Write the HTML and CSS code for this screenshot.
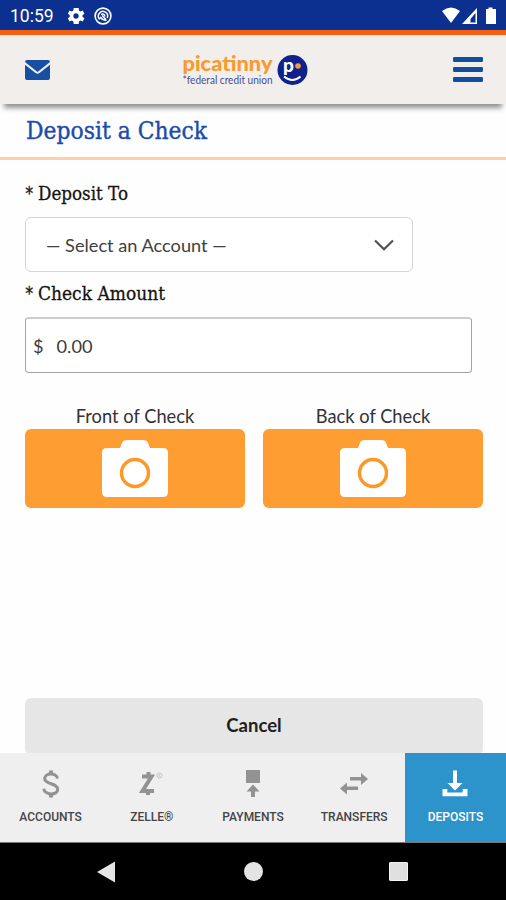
FILE: index.html
```html
<!DOCTYPE html>
<html lang="en">
<head>
<meta charset="utf-8">
<title>Deposit a Check</title>
<link rel="stylesheet" href="styles.css">
</head>
<body>
<div class="status">
  <span class="clock">10:59</span>
  <svg class="gear" width="16" height="16" viewBox="3 3 18 18"><path fill="#fff" fill-rule="evenodd" d="M19.4 13c.1-.7.1-1.300 0-2l2.100-1.600-2-3.500-2.500 1a8 8 0 0 0-1.700-1L15 3H9.500L9 5.900a8 8 0 0 0-1.700 1l-2.500-1-2 3.500L4.900 11v2l-2.100 1.600 2 3.500 2.500-1 1.700 1 .5 2.900H15l.3-2.900 1.700-1 2.500 1 2-3.500zM12 15a3 3 0 1 1 0-6 3 3 0 0 1 0 6z"/></svg>
  <svg class="ring" width="18" height="18" viewBox="0 0 18 18" fill="none" stroke="#fff"><circle cx="9" cy="9" r="7.900" stroke-width="1.600"/><path d="M5.800 12.400A4.600 4.600 0 1 1 13.200 11" stroke-width="1.500"/><path d="M7 7.500q3-1.500 4 2M6 10q2 3 6.500 3.200M8 8.500l4 4" stroke-width="1.500"/></svg>
  <svg class="signals" width="56" height="18" viewBox="0 0 56 18" fill="#fff"><path d="M0 4Q9-3 18 4L9 16z"/><path fill-rule="evenodd" d="M35 1v16H20zM33.500 6l-5 6v3.500h5z"/><path d="M46.500.5h4V2H54v15H44V2h2.500z"/></svg>
</div>
<header class="header">
  <svg width="25" height="20" viewBox="0 0 25 20" fill="#1750a3"><path d="M2 0h21q2 0 2 2L12.500 12 0 2Q0 0 2 0z"/><path d="M0 4.800l10.500 8.300q2 1.400 4 0L25 4.800V18q0 2-2 2H2q-2 0-2-2z"/></svg>
  <svg class="logo" width="128" height="36" viewBox="0 0 128 36">
    <text class="brand" x="1.500" y="18.500" textLength="90" lengthAdjust="spacingAndGlyphs">picatinny</text>
    <text class="tagline" x="1.500" y="32" textLength="90" lengthAdjust="spacingAndGlyphs">*federal credit union</text>
    <circle cx="111.500" cy="18" r="15" fill="#10218b"/>
    <text class="mark" x="102" y="20">p</text>
    <circle cx="117" cy="14" r="2.800" fill="#f59a48"/>
    <path d="M103 24.500q8.500 7 16.500 0" fill="none" stroke="#fff" stroke-width="2"/>
  </svg>
  <svg width="30" height="25" viewBox="0 0 30 25" fill="#104f9f"><rect width="30" height="5" rx="1.200"/><rect y="10" width="30" height="5" rx="1.200"/><rect y="20" width="30" height="5" rx="1.200"/></svg>
</header>
<h1 class="title"><svg width="260" height="34" viewBox="0 0 260 34"><text x="0" y="24" textLength="181" lengthAdjust="spacingAndGlyphs">Deposit a Check</text></svg></h1>
<main class="form">
  <label class="label"><svg width="180" height="26" viewBox="0 0 180 26"><text x="0.500" y="19" textLength="7.500" lengthAdjust="spacingAndGlyphs">*</text><text x="13" y="18.500" textLength="90" lengthAdjust="spacingAndGlyphs">Deposit To</text></svg></label>
  <div class="select"><span>— Select an Account —</span><svg width="20" height="12" viewBox="0 0 20 12" fill="none" stroke="#505050" stroke-width="2.200"><path d="M1 1.500l9 8.700 9-8.700"/></svg></div>
  <label class="label second"><svg width="180" height="26" viewBox="0 0 180 26"><text x="0.500" y="19" textLength="7.500" lengthAdjust="spacingAndGlyphs">*</text><text x="13" y="19" textLength="127" lengthAdjust="spacingAndGlyphs">Check Amount</text></svg></label>
  <div class="amount"><span>$</span><span>0.00</span></div>
  <div class="photos">
    <div class="photo"><span class="caption">Front of Check</span><div class="shoot"><svg width="66" height="58" viewBox="0 0 66 58"><path fill="#fff" d="M5 8h13l2-5q1-3 5-3h16q4 0 5 3l2 5h13q5 0 5 5v39q0 5-5 5H5q-5 0-5-5V13q0-5 5-5z"/><circle cx="33" cy="33" r="13.500" fill="none" stroke="#fd9827" stroke-width="3.400"/></svg></div></div>
    <div class="photo"><span class="caption">Back of Check</span><div class="shoot"><svg width="66" height="58" viewBox="0 0 66 58"><path fill="#fff" d="M5 8h13l2-5q1-3 5-3h16q4 0 5 3l2 5h13q5 0 5 5v39q0 5-5 5H5q-5 0-5-5V13q0-5 5-5z"/><circle cx="33" cy="33" r="13.500" fill="none" stroke="#fd9827" stroke-width="3.400"/></svg></div></div>
  </div>
  <div class="cancel">Cancel</div>
</main>
<nav class="tabs">
  <div class="tab"><svg width="30" height="30" viewBox="0 0 30 30" fill="none" stroke="#929292" stroke-width="3"><path d="M21.500 9.500C20.500 3.500 8.700 3.500 8.700 9.500c0 6.500 13 4 13 11 0 6-13 6-14-.8"/><path d="M15 1.500V5M15 25v3.500" stroke-width="4"/></svg><span>ACCOUNTS</span></div>
  <div class="tab"><svg width="30" height="30" viewBox="0 0 30 30" fill="none" stroke="#929292"><path d="M5 7.500h9.500L5.500 22H17" stroke-width="4"/><path d="M11.500 3V8M11 21.500V26" stroke-width="4"/><circle cx="22.500" cy="6.500" r="2.500" stroke="#c4c4c4"/><path d="M22 8V5.500h1.300L22 7l1.400 1" stroke="#c4c4c4" stroke-width=".6"/></svg><span>ZELLE®</span></div>
  <div class="tab"><svg width="30" height="30" viewBox="0 0 30 30" fill="#929292"><path d="M8 1h14v13H8zM15 15.500l6.500 7H17V28h-4v-5.500H8.500z"/></svg><span>PAYMENTS</span></div>
  <div class="tab"><svg width="30" height="30" viewBox="0 0 30 30" fill="#929292"><path d="M11 8h11V4l7 6-7 6v-4.500H11zM19 17.500H8V13.500l-7 6 7 6V21h11z"/></svg><span>TRANSFERS</span></div>
  <div class="tab active"><svg width="30" height="30" viewBox="0 0 30 30" fill="#fff"><path d="M13 1.500h4V14h5.500L15 21.500 7.500 14H13zM2.500 20h4.800v3.500h15.400V20h4.800v7.300h-25z"/></svg><span>DEPOSITS</span></div>
</nav>
<div class="system">
  <svg width="18" height="22" viewBox="0 0 18 22"><path fill="#e4e4e4" d="M18 .5v21L0 11z"/></svg>
  <span class="home"></span><span class="recent"></span>
</div>
</body>
</html>
```
FILE: styles.css
```css
* { box-sizing: border-box; }
body { margin: 0; width: 506px; height: 900px; overflow: hidden; display: flex; flex-direction: column; background: #fefefe; font-family: Lato, sans-serif; color: #333; }
svg { display: block; flex: none; overflow: visible; }

.status { height: 35px; flex: none; display: flex; align-items: center; padding: 1px 8px 0 10px; background: #0b308f; border-bottom: 5px solid #f3600f; color: #fff; }
.clock { width: 58px; font: 17.500px Roboto, sans-serif; }
.ring { margin-left: 10px; }
.signals { margin-left: auto; }

.header { height: 69px; flex: none; display: flex; align-items: center; justify-content: space-between; padding: 0 23px 0 25px; background: #f2eeeb; box-shadow: 0 8px 5px -4px #8f938d; clip-path: inset(0 0 -12px 0); }
.logo { position: relative; left: -6.500px; }
.brand { font: 900 20px Lato, sans-serif; fill: #f99a2e; }
.tagline { font: 10.500px Lato, sans-serif; fill: #454f9b; }
.mark { font: 900 19px Lato, sans-serif; fill: #fff; }

.title { height: 56px; flex: none; margin: 0; padding: 11px 26px 0; border-bottom: 3px solid #ffcda6; font: 23.500px "DejaVu Serif", serif; }
.title text { fill: #1c4caa; stroke: #1c4caa; stroke-width: .4px; }

.form { height: 593px; flex: none; display: flex; flex-direction: column; padding: 21px 22px 0 25px; }
.label { height: 26px; font: 18px "DejaVu Serif", serif; }
.label text { fill: #141414; stroke: #141414; stroke-width: .3px; }
.second { margin-top: 9px; }
.select { width: 388px; height: 55px; margin-top: 10px; display: flex; align-items: center; justify-content: space-between; padding: 0 18px 0 20px; border: 1.500px solid #d4d4d4; border-radius: 6px; background: #fff; font-size: 18.200px; color: #404040; }
.amount { width: 447px; height: 56px; margin-top: 10px; display: flex; align-items: center; gap: 13px; padding: 0 7px; border: 1px solid #a3a3a3; border-top: 2px solid #ccc; border-radius: 4px; background: #fff; font-size: 18.200px; color: #3a3a3a; }
.photos { display: flex; gap: 18px; margin-top: 31px; }
.photo { width: 220px; }
.caption { display: block; height: 25px; line-height: 24px; text-align: center; font-size: 18.300px; white-space: nowrap; }
.shoot { height: 79px; display: flex; justify-content: center; padding-top: 11px; border-radius: 6px; background: #fe9d32; }
.cancel { width: 458px; height: 55px; flex: none; margin-top: auto; display: flex; align-items: center; justify-content: center; padding-bottom: 1px; border-radius: 6px 6px 4px 4px; background: #e6e6e6; font-size: 18.500px; font-weight: 700; color: #202020; }

.tabs { height: 89px; flex: none; display: grid; grid-template-columns: repeat(5, 1fr); background: #efefef; }
.tab { display: flex; flex-direction: column; align-items: center; padding-top: 16px; font: 500 12px Roboto, sans-serif; color: #444; }
.tab span { margin-top: 11px; }
.active { background: #2c94ca; color: #fff; }

.system { flex: 1; display: flex; align-items: center; gap: 129px; padding: 0 0 0 97px; background: #000; border-top: 1px solid #777; }
.home { width: 19px; height: 19px; border-radius: 50%; background: #e4e4e4; }
.recent { width: 19px; height: 19px; margin-left: -3px; border-radius: 2px; background: #e0e0e0; box-shadow: inset 0 0 0 1px #f4f4f4; }
```
